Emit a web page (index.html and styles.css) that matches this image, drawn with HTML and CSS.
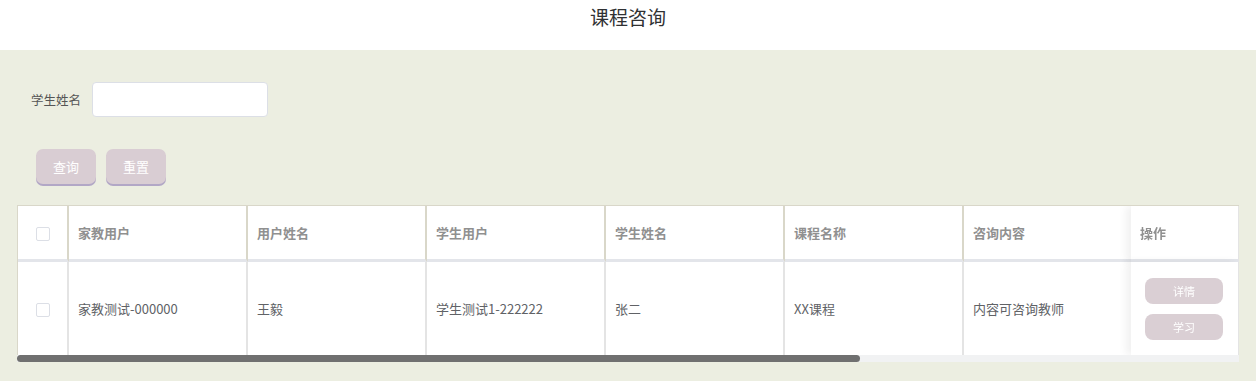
FILE: index.html
```html
<!DOCTYPE html>
<html lang="zh-CN">
<head>
    <meta charset="UTF-8">
    <meta name="viewport" content="width=device-width, initial-scale=1.0">
    <link rel="stylesheet" href="styles.css">
    <title>课程咨询</title>
</head>
<body>

    <div class="page-head">
        <div class="page-title">课程咨询</div>
    </div>

    <div class="main">

        <div class="search-row">
            <label class="search-label">学生姓名</label>
            <input class="search-input" type="text">
        </div>

        <div class="btn-row">
            <button class="btn">查询</button>
            <button class="btn">重置</button>
        </div>

        <div class="table-wrap">
            <table class="grid">
                <colgroup>
                    <col class="col-check">
                    <col class="col-data">
                    <col class="col-data">
                    <col class="col-data">
                    <col class="col-data">
                    <col class="col-data">
                    <col>
                    <col class="col-ops">
                </colgroup>
                <thead>
                    <tr>
                        <th class="cell-check"><span class="checkbox"></span></th>
                        <th>家教用户</th>
                        <th>用户姓名</th>
                        <th>学生用户</th>
                        <th>学生姓名</th>
                        <th>课程名称</th>
                        <th>咨询内容</th>
                        <th class="cell-ops">操作</th>
                    </tr>
                </thead>
                <tbody>
                    <tr>
                        <td class="cell-check"><span class="checkbox"></span></td>
                        <td>家教测试-000000</td>
                        <td>王毅</td>
                        <td>学生测试1-222222</td>
                        <td>张二</td>
                        <td>XX课程</td>
                        <td>内容可咨询教师</td>
                        <td class="cell-ops">
                            <button class="op-btn">详情</button>
                            <button class="op-btn">学习</button>
                        </td>
                    </tr>
                </tbody>
            </table>
        </div>
        <!-- horizontal scrollbar of the table -->
        <div class="scroll-track">
            <div class="scroll-thumb"></div>
        </div>

    </div>

</body>
</html>
```

FILE: styles.css
```css
body {
    margin: 0;
    font-family: "Noto Sans CJK SC", sans-serif;
    background-color: #eceee1;
}

.page-head {
    height: 50px;
    background-color: #fff;
    text-align: center;
}

.page-title {
    padding-top: 4px;
    font-size: 19px;
    line-height: 26px;
    color: #303133;
}

.main {
    padding: 32px 17px 19px;
}

.search-row {
    display: flex;
    align-items: center;
    padding-left: 14px;
}

.search-label {
    font-size: 12.5px;
    color: #555;
    margin-right: 11px;
}

.search-input {
    width: 176px;
    height: 35px;
    box-sizing: border-box;
    border: 1px solid #dcdfe6;
    border-radius: 4px;
    background: #fff;
    outline: none;
}

.btn-row {
    display: flex;
    gap: 10px;
    padding: 32px 0 0 19px;
    margin-bottom: 21px;
}

.btn {
    width: 60px;
    height: 35px;
    border: none;
    border-radius: 7px;
    background-color: #d9cdd3;
    box-shadow: 0 2px 0 #b2a7c6;
    color: #fff;
    font-family: inherit;
    font-size: 13px;
}

.table-wrap {
    overflow: hidden;
    background-color: #fff;
    border-top: 1px solid #d9d7c9;
    border-left: 1px solid #d9d7c9;
}

.scroll-track {
    height: 7px;
    background-color: #f1f2f3;
}

.scroll-thumb {
    width: 69%;
    height: 100%;
    background-color: #707070;
    border-radius: 4px;
}

.grid {
    width: 1776px;
    table-layout: fixed;
    border-collapse: separate;
    border-spacing: 0;
    font-size: 13px;
}

.col-check {
    width: 51px;
}

.col-data {
    width: 179px;
}

.col-ops {
    width: 108px;
}

.grid th,
.grid td {
    padding: 0 9px;
    text-align: left;
    white-space: nowrap;
    background-color: #fff;
}

.grid th {
    height: 53px;
    color: #909090;
    font-weight: 600;
    border-right: 2px solid #d9d7c9;
    border-bottom: 3px solid #e3e5ea;
}

.grid td {
    height: 93px;
    color: #606266;
    border-right: 2px solid #e4e4e4;
}

.grid .cell-check {
    padding: 0;
    text-align: center;
}

.checkbox {
    display: inline-block;
    width: 12px;
    height: 12px;
    border: 1px solid #dcdfe6;
    border-radius: 2px;
    vertical-align: middle;
}

.grid .cell-ops {
    position: sticky;
    right: 0;
    padding: 0 8px 0 9px;
    box-shadow: -5px 0 8px rgba(0, 0, 0, 0.06);
    border-right: 1px solid #e4e4e4;
}

.op-btn {
    display: block;
    width: 78px;
    height: 26px;
    margin: 10px 0 10px 5px;
    border: none;
    border-radius: 8px;
    background-color: #dacfd4;
    color: #fff;
    font-family: inherit;
    font-size: 11px;
}
```
